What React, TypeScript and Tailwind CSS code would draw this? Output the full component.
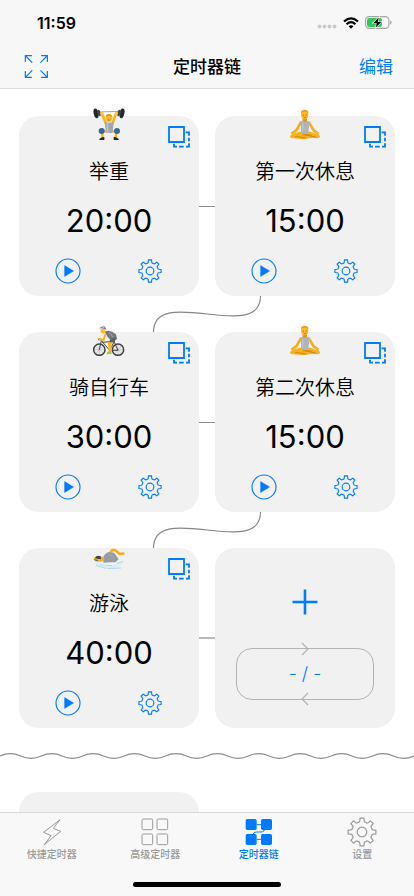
import type { ReactNode } from 'react';
import clsx from 'clsx';

type Activity = 'lifting' | 'meditation' | 'cycling' | 'swimming';

interface Timer {
  id: number;
  name: string;
  time: string;
  activity: Activity;
}

const timers: Timer[] = [
  { id: 1, name: '举重', time: '20:00', activity: 'lifting' },
  { id: 2, name: '第一次休息', time: '15:00', activity: 'meditation' },
  { id: 3, name: '骑自行车', time: '30:00', activity: 'cycling' },
  { id: 4, name: '第二次休息', time: '15:00', activity: 'meditation' },
  { id: 5, name: '游泳', time: '40:00', activity: 'swimming' },
];

const point = (deg: number, r: number) => {
  const rad = ((deg - 90) * Math.PI) / 180;
  return `${(15 + r * Math.cos(rad)).toFixed(2)} ${(15 + r * Math.sin(rad)).toFixed(2)}`;
};

// eight teeth with rounded valleys between them
const gearPath =
  [0, 45, 90, 135, 180, 225, 270, 315]
    .map((a, i) =>
      [
        `${i === 0 ? 'M' : 'L'}${point(a - 8, 14)}`,
        `L${point(a + 8, 14)}`,
        `L${point(a + 11, 11.3)}`,
        `C${point(a + 15, 9.6)} ${point(a + 19, 10.2)} ${point(a + 22.5, 10.4)}`,
        `C${point(a + 26, 10.2)} ${point(a + 30, 9.6)} ${point(a + 34, 11.3)}`,
      ].join(' ')
    )
    .join(' ') + ' Z';

const GearIcon = ({ className, strokeWidth = 1.4 }: { className?: string; strokeWidth?: number }) => (
  <svg viewBox="0 0 30 30" className={className} fill="none" stroke="currentColor" strokeWidth={strokeWidth} strokeLinejoin="round">
    <path d={gearPath} />
    <circle cx="15" cy="15" r="4.8" />
  </svg>
);

const PlayIcon = () => (
  <svg viewBox="0 0 26 26" className="size-[26px]">
    <circle cx="13" cy="13" r="12" fill="none" stroke="currentColor" strokeWidth="1.1" />
    <path d="M9.6 7.6 18.6 13 9.6 18.4Z" fill="currentColor" stroke="currentColor" strokeWidth="0.5" strokeLinejoin="round" />
  </svg>
);

const CopyIcon = () => (
  <svg viewBox="474 76 66 66" className="size-[22px]" fill="none" stroke="currentColor" strokeWidth="5.4">
    <path d="M477 79H522V124H477Z" />
    <path d="M527 95H537V105M537 111V122M537 128V138H528M521 138H507M501 138H492V129" />
  </svg>
);

const ExpandIcon = () => (
  <svg viewBox="72 160 76 76" className="size-[25px]" fill="none" stroke="currentColor" strokeWidth="3.6">
    <path d="M76 184V165H96M76 165 97 186" />
    <path d="M124 165H143V184M143 165 122 186" />
    <path d="M76 212V231H96M76 231 97 210" />
    <path d="M124 231H143V212M143 231 122 210" />
  </svg>
);

const Lifter = () => (
  <svg viewBox="39 20 96 102" className="h-[34px] w-8">
    <path d="M50 35 126 33" stroke="#777" strokeWidth="2" />
    <g fill="#24272a">
      <ellipse cx="48" cy="39" rx="7" ry="15" transform="rotate(-12 48 39)" />
      <ellipse cx="57" cy="38" rx="5" ry="10" fill="#3f4448" transform="rotate(-12 57 38)" />
      <ellipse cx="126" cy="39" rx="7" ry="15" transform="rotate(12 126 39)" />
      <ellipse cx="117" cy="38" rx="5" ry="10" fill="#3f4448" transform="rotate(12 117 38)" />
    </g>
    <path d="M66 40 77 68M108 40 98 68" stroke="#f7b521" strokeWidth="8" strokeLinecap="round" />
    <circle cx="66" cy="39" r="5" fill="#ffc83d" />
    <circle cx="109" cy="39" r="5" fill="#ffc83d" />
    <path d="M74 65Q87 70 101 65L98 98H78Z" fill="#a3a6ac" />
    <path d="M80 68H84L86 97H80Z" fill="#c1c3c8" />
    <ellipse cx="87" cy="54" rx="10" ry="12" fill="#ffc32f" />
    <path d="M77 53Q76 41 87 41T97 53Q94 46 87 48 80 46 77 53" fill="#e69a13" />
    <path d="M83 58Q87 62 91 58" stroke="#8b5510" strokeWidth="2" fill="none" />
    <circle cx="84" cy="53" r="1" fill="#5d3910" />
    <circle cx="91" cy="53" r="1" fill="#5d3910" />
    <path d="M79 94 65 91 68 113M97 94 111 91 106 113" stroke="#f6b424" strokeWidth="7" fill="none" />
    <circle cx="65" cy="92" r="9" fill="#356a96" />
    <circle cx="111" cy="92" r="9" fill="#356a96" />
    <path d="M57 119Q61 110 73 110V119ZM101 110Q114 110 117 119H101Z" fill="#1d2836" />
  </svg>
);

const Meditator = () => (
  <svg viewBox="246 20 96 102" className="h-[34px] w-8">
    <path d="M281 67 268 90 256 98M306 67 320 90 332 98" stroke="#f5ad18" strokeWidth="8" fill="none" strokeLinecap="round" strokeLinejoin="round" />
    <path d="M278 94 258 100Q244 107 252 113L289 117 311 113 333 114Q344 110 336 103L310 94Z" fill="#f7b01e" />
    <path d="M264 108 298 113M288 103 327 110M294 102 314 105" stroke="#c97f10" strokeWidth="2.5" />
    <path d="M287 52H300V65H287Z" fill="#e09618" />
    <path d="M280 64 287 61Q293 68 300 61L307 64 306 80 304 98Q293 102 282 98L282 80Z" fill="#b1b3ba" />
    <path d="M287 70V94" stroke="#c3c5ca" strokeWidth="4" />
    <ellipse cx="293" cy="43" rx="11" ry="14" fill="#fdb924" />
    <path d="M282 40Q281 28 293 28 306 28 304 40 300 34 293 35 286 33 282 40" fill="#e8a21a" />
    <path d="M287 44H291M296 44H300M290 51Q293 53 297 51" stroke="#99601a" strokeWidth="2" fill="none" />
  </svg>
);

const Cyclist = () => (
  <svg viewBox="99 98 96 102" className="h-[34px] w-8">
    <g fill="#e4e5e7" fillOpacity="0.5" stroke="#3a3d40" strokeWidth="4.5">
      <circle cx="118" cy="178" r="17" />
      <circle cx="174" cy="178" r="17" />
    </g>
    <path d="M106 166 130 190M130 166 106 190M118 162V194M102 178H134M162 166 186 190M186 166 162 190M174 162V194M158 178H190" stroke="#8c8e91" strokeWidth="1" />
    <path d="M118 178 124 151 149 180H174L162 153 126 156M149 180 163 153M114 148 124 148" stroke="#43474b" strokeWidth="3" fill="none" />
    <path d="M134 124Q151 115 168 132L171 147 154 152 143 140Z" fill="#73777e" />
    <path d="M147 126 159 140" stroke="#989ba1" strokeWidth="4" />
    <path d="M136 133 131 149 117 145" stroke="#f4b323" strokeWidth="6" fill="none" strokeLinecap="round" strokeLinejoin="round" />
    <path d="M160 150 149 158 151 184" stroke="#f8b928" strokeWidth="10" fill="none" />
    <path d="M170 141 152 145 147 156 163 156Z" fill="#5b5f64" />
    <path d="M141 185 153 181 155 191 140 192Z" fill="#a7c64b" />
    <path d="M121 116H136V127Q127 134 122 126Z" fill="#ffbd29" />
    <path d="M117 116Q119 106 130 106 140 109 139 119Z" fill="#d5d7da" />
    <path d="M122 111 135 115M131 107 138 117" stroke="#4c5055" strokeWidth="2" />
  </svg>
);

const Swimmer = () => (
  <svg viewBox="99 116 96 102" className="h-[34px] w-8">
    <path d="M103 184Q123 179 146 184T188 186Q182 202 149 206 111 203 103 184" fill="#dcecf3" />
    <path d="M109 196 137 204M144 205 182 203M172 188 189 184M122 192 155 196" stroke="#b4d8e7" strokeWidth="3" fill="none" strokeLinecap="round" />
    <path d="M130 170Q134 158 149 154L162 157 176 177 166 186 130 187Z" fill="#989ba2" />
    <path d="M153 153Q159 146 166 150L179 161 190 160" stroke="#f6ae1f" strokeWidth="8" fill="none" strokeLinecap="round" strokeLinejoin="round" />
    <path d="M147 162 158 168 162 177" stroke="#a5a8ae" strokeWidth="4" fill="none" />
    <ellipse cx="117" cy="176" rx="16" ry="8" fill="#f6b024" />
    <path d="M105 173Q110 162 122 168L123 176Q113 177 105 173" fill="#3b454f" />
    <path d="M103 178 113 181" stroke="#2d627d" strokeWidth="3" />
    <path d="M106 187Q124 185 135 188 151 185 170 188L162 193 133 193Z" fill="#edf7fb" />
  </svg>
);

const activityIcons: Record<Activity, ReactNode> = {
  lifting: <Lifter />,
  meditation: <Meditator />,
  cycling: <Cyclist />,
  swimming: <Swimmer />,
};

const TimerCard = ({ timer }: { timer: Timer }) => (
  <article className="relative flex min-w-0 flex-1 flex-col rounded-[20px] bg-[#f1f1f1] pt-2.5 pb-3">
    <div className="absolute inset-x-0 -top-[9px] flex justify-center">{activityIcons[timer.activity]}</div>
    <button type="button" aria-label={`复制${timer.name}`} className="mr-[9px] self-end text-[#007aff]">
      <CopyIcon />
    </button>
    <h2 className="mt-2.5 text-center text-xl leading-7 font-[350]">{timer.name}</h2>
    <p className="mt-[15px] text-center text-[31px] leading-10">{timer.time}</p>
    <div className="mt-[17px] flex justify-between px-9 text-[#007aff]">
      <button type="button" aria-label={`开始${timer.name}`}>
        <PlayIcon />
      </button>
      <button type="button" aria-label={`设置${timer.name}`} className="p-px">
        <GearIcon className="size-6" />
      </button>
    </div>
  </article>
);

const AddCard = () => (
  <article className="flex min-w-0 flex-1 flex-col items-center rounded-[20px] bg-[#f1f1f1] pt-10">
    <button type="button" aria-label="添加定时器" className="text-[#007aff]">
      <svg viewBox="0 0 28 28" className="size-7" stroke="currentColor" strokeWidth="2.6">
        <path d="M14 1.500V26.500M1.500 14H26.500" />
      </svg>
    </button>
    <button
      type="button"
      aria-label="循环次数"
      className="relative mx-[21px] mt-8 h-[52px] self-stretch rounded-[16px] border border-[#b3b3b3] text-lg font-light text-[#007aff]"
    >
      - / -
      <svg viewBox="0 0 14 14" className="absolute -top-[7px] left-1/2 size-3.5 -translate-x-1/2" fill="none" stroke="#b0b0b0" strokeWidth="1.1">
        <path d="M4 1 10 7 4 13" />
      </svg>
      <svg viewBox="0 0 14 14" className="absolute -bottom-[7px] left-1/2 size-3.5 -translate-x-1/2" fill="none" stroke="#b0b0b0" strokeWidth="1.1">
        <path d="M10 1 4 7 10 13" />
      </svg>
    </button>
  </article>
);

const ChainRow = ({ children, last = false }: { children: [ReactNode, ReactNode]; last?: boolean }) => (
  <div className="flex">
    {children[0]}
    <span className={clsx('w-4 self-center', last ? 'h-0.5 bg-[#b8b8b8]' : 'h-px bg-[#8c8c8c]')} />
    {children[1]}
  </div>
);

const RowConnector = () => (
  <svg viewBox="0 0 376 36" preserveAspectRatio="none" className="block h-9 w-full" fill="none" stroke="#858585" strokeWidth="1.1">
    <path d="M241.500 0C241.500 48 134.500 -12 134.500 36" />
  </svg>
);

const WaveDivider = () => (
  <svg viewBox="0 0 414 10" preserveAspectRatio="none" className="mt-[23px] block h-2.5 w-full" fill="none" stroke="#8c8c8c" strokeWidth="1.2">
    <path
      d={
        'M0 5' +
        Array.from({ length: 10 }, () => 'c7.500 -3.500 13.200 -3.500 20.700 0s13.200 3.500 20.700 0').join('')
      }
    />
  </svg>
);

const StatusBar = () => (
  <div className="flex h-[45px] items-center justify-between pr-[22px] pl-[37px]">
    <span className="text-base leading-5 font-semibold">11:59</span>
    <div className="flex items-center gap-1.5">
      <svg viewBox="0 0 20 13" className="h-[13px] w-5" fill="#c9c9c9">
        <circle cx="2.500" cy="10.500" r="1.900" />
        <circle cx="7.500" cy="10.500" r="1.900" />
        <circle cx="12.500" cy="10.500" r="1.900" />
        <circle cx="17.500" cy="10.500" r="1.900" />
      </svg>
      <svg viewBox="0 0 16 12" className="h-3 w-4" fill="none" stroke="#000" strokeWidth="2.200">
        <path d="M1 4.500Q8 -1.800 15 4.500M3.500 7.200Q8 3.200 12.500 7.200" />
        <path d="M5.600 9.200Q8 7.200 10.400 9.200L8 11.700Z" fill="#000" stroke="none" />
      </svg>
      <svg viewBox="0 0 27 13" className="h-[13px] w-[27px]">
        <rect x="0.600" y="0.600" width="23.300" height="11.800" rx="3.600" fill="none" stroke="#a3a3a3" strokeWidth="1.100" />
        <rect x="2" y="2" width="15" height="9" rx="2.200" fill="#34c759" />
        <path d="M25.200 4.300Q26.600 5 26.600 6.500T25.200 8.700Z" fill="#a3a3a3" />
        <path d="M13.800 1.500 8 7.200H11.800L10.700 11.500 16.600 5.700H12.700Z" fill="#000" stroke="#f7f7f7" strokeWidth="1.200" paintOrder="stroke" />
      </svg>
    </div>
  </div>
);

const BoltIcon = () => (
  <svg viewBox="111 260 90 90" className="size-[30px]" fill="none" stroke="currentColor" strokeWidth="3" strokeLinejoin="round">
    <path d="M180 268 131 306 153 316 133 343 182 303 160 294Z" />
  </svg>
);

const GridIcon = () => (
  <svg viewBox="422 260 90 90" className="size-[30px]" fill="none" stroke="currentColor" strokeWidth="3">
    <rect x="428" y="266" width="32" height="32" rx="4" />
    <rect x="473" y="266" width="32" height="32" rx="4" />
    <rect x="428" y="311" width="32" height="32" rx="4" />
    <rect x="473" y="311" width="32" height="32" rx="4" />
  </svg>
);

const ChainIcon = () => (
  <svg viewBox="110 260 90 90" className="size-[30px]" fill="currentColor">
    <rect x="115" y="266" width="33" height="33" rx="5" />
    <rect x="161" y="266" width="33" height="33" rx="5" />
    <rect x="115" y="311" width="33" height="33" rx="5" />
    <rect x="161" y="311" width="33" height="33" rx="5" />
    <path d="M148 283H161M148 327H161M171 298C171 312 138 298 138 312" fill="none" stroke="currentColor" strokeWidth="3" />
  </svg>
);

const tabs = [
  { label: '快捷定时器', icon: <BoltIcon /> },
  { label: '高级定时器', icon: <GridIcon /> },
  { label: '定时器链', icon: <ChainIcon />, active: true },
  { label: '设置', icon: <GearIcon className="size-[30px]" strokeWidth={1.2} /> },
];

const App = () => (
  <div className="flex h-screen flex-col bg-white font-['Inter','Noto_Sans_CJK_SC',sans-serif] text-black">
    <header className="border-b border-[#dcdcdc] bg-[#f7f7f7]">
      <StatusBar />
      <div className="grid h-[43px] grid-cols-3 items-center px-[21px] text-[17px]">
        <button type="button" aria-label="全屏" className="ml-[3px] justify-self-start text-[#007aff]">
          <ExpandIcon />
        </button>
        <h1 className="pt-0.5 text-center font-medium">定时器链</h1>
        <button type="button" className="justify-self-end pt-0.5 text-[#007aff]">
          编辑
        </button>
      </div>
    </header>

    <main className="min-h-0 flex-1 overflow-y-auto pt-[27px] [scrollbar-width:none]">
      <section className="px-[19px]">
        <ChainRow>
          <TimerCard timer={timers[0]} />
          <TimerCard timer={timers[1]} />
        </ChainRow>
        <RowConnector />
        <ChainRow>
          <TimerCard timer={timers[2]} />
          <TimerCard timer={timers[3]} />
        </ChainRow>
        <RowConnector />
        <ChainRow last>
          <TimerCard timer={timers[4]} />
          <AddCard />
        </ChainRow>
      </section>
      <WaveDivider />
      <section className="mt-[31px] grid grid-cols-2 gap-4 px-[19px]">
        <div className="h-[180px] rounded-[20px] bg-[#f1f1f1]" />
      </section>
    </main>

    <footer className="border-t border-[#d9d9d9] bg-[#f8f8f8]">
      <nav className="grid grid-cols-4 pt-1">
        {tabs.map((tab) => (
          <button
            key={tab.label}
            type="button"
            aria-current={tab.active ? 'page' : undefined}
            className={clsx(
              'flex flex-col items-center text-[10px] leading-[14px] font-medium',
              tab.active ? 'text-[#007aff]' : 'text-[#999999]'
            )}
          >
            {tab.icon}
            {tab.label}
          </button>
        ))}
      </nav>
      <div className="mx-auto mt-[21px] mb-[9px] h-[5px] w-[148px] rounded-full bg-black" />
    </footer>
  </div>
);

export default App;
